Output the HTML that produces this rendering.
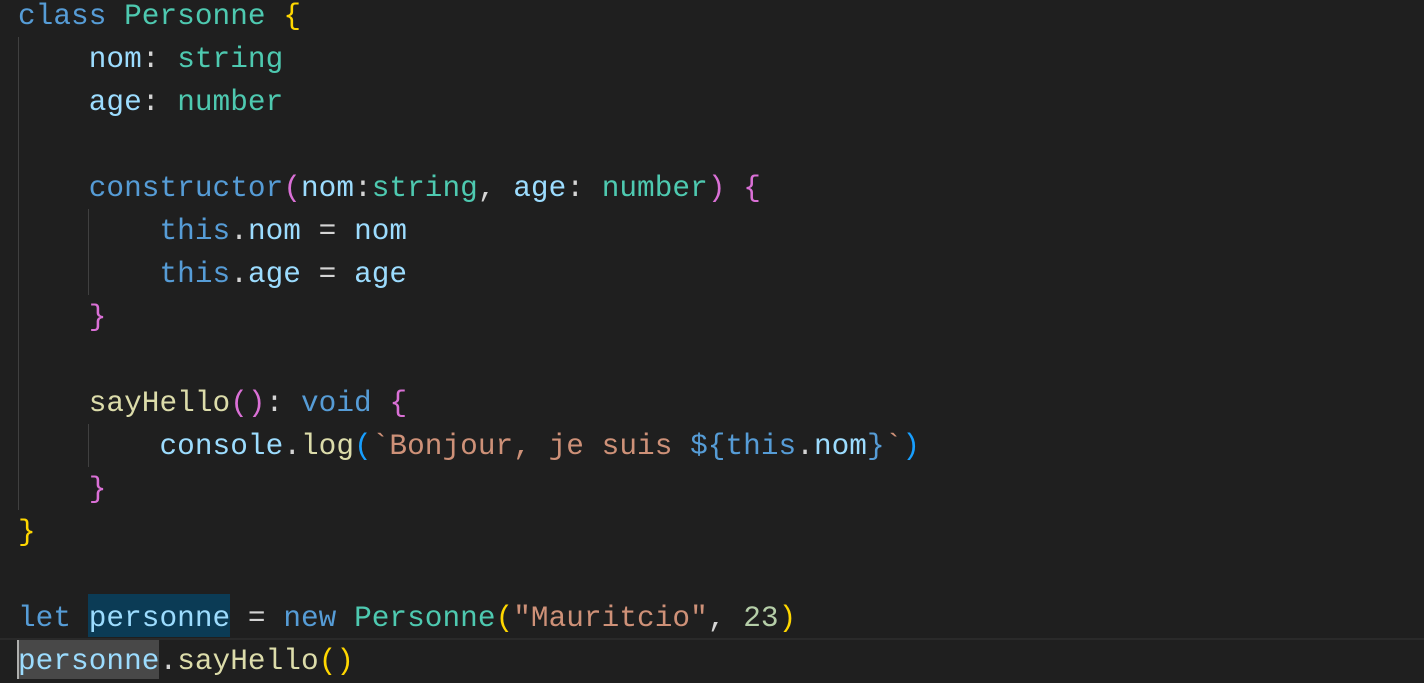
<!DOCTYPE html>
<html><head><style>
body{margin:0;background:#1f1f1f;width:1424px;height:679px;overflow:hidden;position:relative}
.c{position:absolute;left:18px;top:-5.5px;font-family:"Liberation Mono",monospace;font-size:29.4px;line-height:43px;color:#d4d4d4;white-space:pre;letter-spacing:0.05px}
.k{color:#569cd6}.t{color:#4ec9b0}.p{color:#9cdcfe}.y{color:#ffd700}.m{color:#da70d6}.b{color:#179fff}.f{color:#dcdcaa}.s{color:#ce9178}.n{color:#b5cea8}
.g{position:absolute;width:1px;background:#404040}
</style></head><body>
<div style="position:absolute;left:0;top:638px;width:1424px;height:41px;border-top:2px solid #2a2a2a"></div>
<div style="position:absolute;left:88px;top:594px;width:142px;height:43px;background:#0b3b55"></div>
<div style="position:absolute;left:18px;top:640px;width:141px;height:39px;background:#484848"></div>
<div style="position:absolute;left:17px;top:640px;width:2px;height:39px;background:#aeafad"></div>
<div class="g" style="left:18px;top:37px;height:473px"></div>
<div class="g" style="left:88px;top:209px;height:86px"></div>
<div class="g" style="left:88px;top:424px;height:43px"></div>
<div class="c"><span class="k">class</span> <span class="t">Personne</span> <span class="y">{</span>
    <span class="p">nom</span>: <span class="t">string</span>
    <span class="p">age</span>: <span class="t">number</span>

    <span class="k">constructor</span><span class="m">(</span><span class="p">nom</span>:<span class="t">string</span>, <span class="p">age</span>: <span class="t">number</span><span class="m">)</span> <span class="m">{</span>
        <span class="k">this</span>.<span class="p">nom</span> = <span class="p">nom</span>
        <span class="k">this</span>.<span class="p">age</span> = <span class="p">age</span>
    <span class="m">}</span>

    <span class="f">sayHello</span><span class="m">()</span>: <span class="k">void</span> <span class="m">{</span>
        <span class="p">console</span>.<span class="f">log</span><span class="b">(</span><span class="s">`Bonjour, je suis </span><span class="k">${this</span>.<span class="p">nom</span><span class="k">}</span><span class="s">`</span><span class="b">)</span>
    <span class="m">}</span>
<span class="y">}</span>

<span class="k">let</span> <span class="p">personne</span> = <span class="k">new</span> <span class="t">Personne</span><span class="y">(</span><span class="s">"Mauritcio"</span>, <span class="n">23</span><span class="y">)</span>
<span class="p">personne</span>.<span class="f">sayHello</span><span class="y">()</span></div>
</body></html>
